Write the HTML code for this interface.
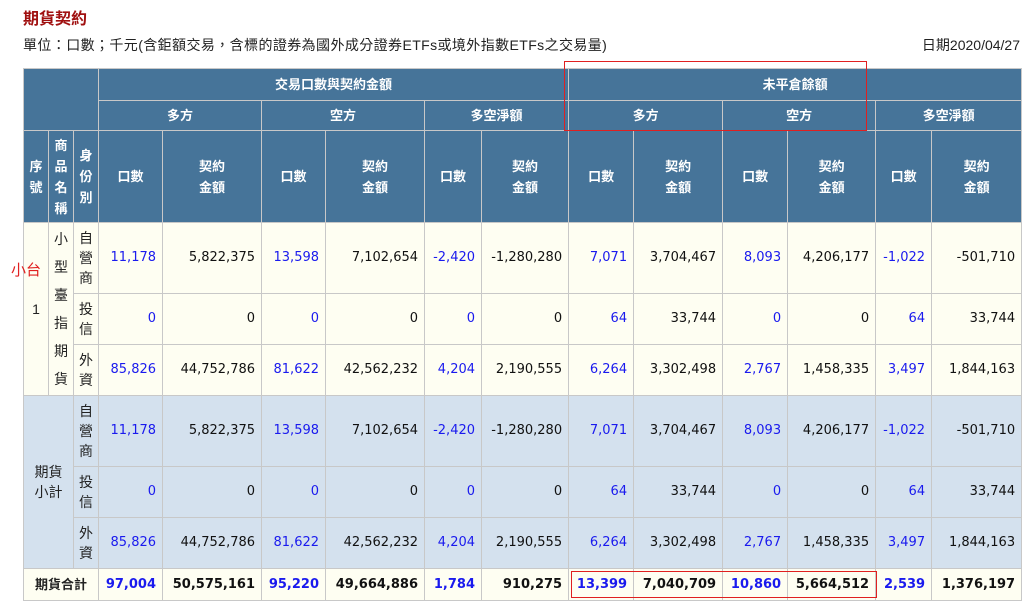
<!DOCTYPE html>
<html><head><meta charset="utf-8"><style>
body{margin:0;background:#fff;font-family:"Liberation Sans","Noto Sans CJK TC",sans-serif;width:1024px;height:615px;overflow:hidden;position:relative}
.t1{position:absolute;left:23px;top:5px;color:#a01010;font-weight:bold;font-size:16px}
.t2{position:absolute;left:23px;top:35px;font-size:14px;color:#222;letter-spacing:0.4px}
.t3{position:absolute;right:4px;top:35px;font-size:14px;color:#222}
table{position:absolute;left:23px;top:68px;border-collapse:collapse;table-layout:fixed;width:998px}
td{border:1px solid #c8c8c8;padding:0;font-size:13px;text-align:center;line-height:18px}
.h td,td.h{background:#467499;color:#fff;font-weight:bold;line-height:21px}
td.n{text-align:right;padding-right:6px;font-family:"DejaVu Sans",sans-serif;font-size:13px;color:#111}
td.b{color:#1a1aee}
.y td{background:#fefef2}
.s td{background:#d4e1ee}
td.v{line-height:20px;color:#222;font-size:14px}
td.v6{line-height:28px}
.tot td{background:#fefef2;font-weight:bold}
.box{position:absolute;border:1.5px solid #e02020}
.red{position:absolute;left:11px;top:259px;color:#e02020;font-size:15px}
</style></head><body>
<div class="t1">期貨契約</div>
<div class="t2">單位：口數；千元(含鉅額交易，含標的證券為國外成分證券ETFs或境外指數ETFs之交易量)</div>
<div class="t3">日期2020/04/27</div>
<table>
<colgroup><col style="width:25px"><col style="width:25px"><col style="width:25px"><col style="width:64px"><col style="width:99px"><col style="width:64px"><col style="width:99px"><col style="width:57px"><col style="width:87px"><col style="width:65px"><col style="width:89px"><col style="width:65px"><col style="width:88px"><col style="width:56px"><col style="width:90px"></colgroup>
<tr class="h" style="height:32px"><td colspan="3" rowspan="2"></td><td colspan="6">交易口數與契約金額</td><td colspan="6">未平倉餘額</td></tr>
<tr class="h" style="height:30px"><td colspan="2">多方</td><td colspan="2">空方</td><td colspan="2">多空淨額</td><td colspan="2">多方</td><td colspan="2">空方</td><td colspan="2">多空淨額</td></tr>
<tr class="h" style="height:92px"><td>序<br>號</td><td>商<br>品<br>名<br>稱</td><td>身<br>份<br>別</td><td>口數</td><td>契約<br>金額</td><td>口數</td><td>契約<br>金額</td><td>口數</td><td>契約<br>金額</td><td>口數</td><td>契約<br>金額</td><td>口數</td><td>契約<br>金額</td><td>口數</td><td>契約<br>金額</td></tr>
<tr class="y" style="height:71px"><td rowspan="3" class="v">1</td><td rowspan="3" class="v v6">小<br>型<br>臺<br>指<br>期<br>貨</td><td class="v">自<br>營<br>商</td><td class="n b">11,178</td><td class="n">5,822,375</td><td class="n b">13,598</td><td class="n">7,102,654</td><td class="n b">-2,420</td><td class="n">-1,280,280</td><td class="n b">7,071</td><td class="n">3,704,467</td><td class="n b">8,093</td><td class="n">4,206,177</td><td class="n b">-1,022</td><td class="n">-501,710</td></tr>
<tr class="y" style="height:51px"><td class="v">投<br>信</td><td class="n b">0</td><td class="n">0</td><td class="n b">0</td><td class="n">0</td><td class="n b">0</td><td class="n">0</td><td class="n b">64</td><td class="n">33,744</td><td class="n b">0</td><td class="n">0</td><td class="n b">64</td><td class="n">33,744</td></tr>
<tr class="y" style="height:51px"><td class="v">外<br>資</td><td class="n b">85,826</td><td class="n">44,752,786</td><td class="n b">81,622</td><td class="n">42,562,232</td><td class="n b">4,204</td><td class="n">2,190,555</td><td class="n b">6,264</td><td class="n">3,302,498</td><td class="n b">2,767</td><td class="n">1,458,335</td><td class="n b">3,497</td><td class="n">1,844,163</td></tr>
<tr class="s" style="height:71px"><td rowspan="3" colspan="2" class="v">期貨<br>小計</td><td class="v">自<br>營<br>商</td><td class="n b">11,178</td><td class="n">5,822,375</td><td class="n b">13,598</td><td class="n">7,102,654</td><td class="n b">-2,420</td><td class="n">-1,280,280</td><td class="n b">7,071</td><td class="n">3,704,467</td><td class="n b">8,093</td><td class="n">4,206,177</td><td class="n b">-1,022</td><td class="n">-501,710</td></tr>
<tr class="s" style="height:51px"><td class="v">投<br>信</td><td class="n b">0</td><td class="n">0</td><td class="n b">0</td><td class="n">0</td><td class="n b">0</td><td class="n">0</td><td class="n b">64</td><td class="n">33,744</td><td class="n b">0</td><td class="n">0</td><td class="n b">64</td><td class="n">33,744</td></tr>
<tr class="s" style="height:51px"><td class="v">外<br>資</td><td class="n b">85,826</td><td class="n">44,752,786</td><td class="n b">81,622</td><td class="n">42,562,232</td><td class="n b">4,204</td><td class="n">2,190,555</td><td class="n b">6,264</td><td class="n">3,302,498</td><td class="n b">2,767</td><td class="n">1,458,335</td><td class="n b">3,497</td><td class="n">1,844,163</td></tr>
<tr class="tot" style="height:32px"><td colspan="3" style="font-size:13px;color:#222">期貨合計</td><td class="n b">97,004</td><td class="n">50,575,161</td><td class="n b">95,220</td><td class="n">49,664,886</td><td class="n b">1,784</td><td class="n">910,275</td><td class="n b">13,399</td><td class="n">7,040,709</td><td class="n b">10,860</td><td class="n">5,664,512</td><td class="n b">2,539</td><td class="n">1,376,197</td></tr>
</table>
<div class="red">小台</div>
<div class="box" style="left:564px;top:61px;width:301px;height:68px"></div>
<div class="box" style="left:571px;top:571px;width:304px;height:25px"></div>
</body></html>
